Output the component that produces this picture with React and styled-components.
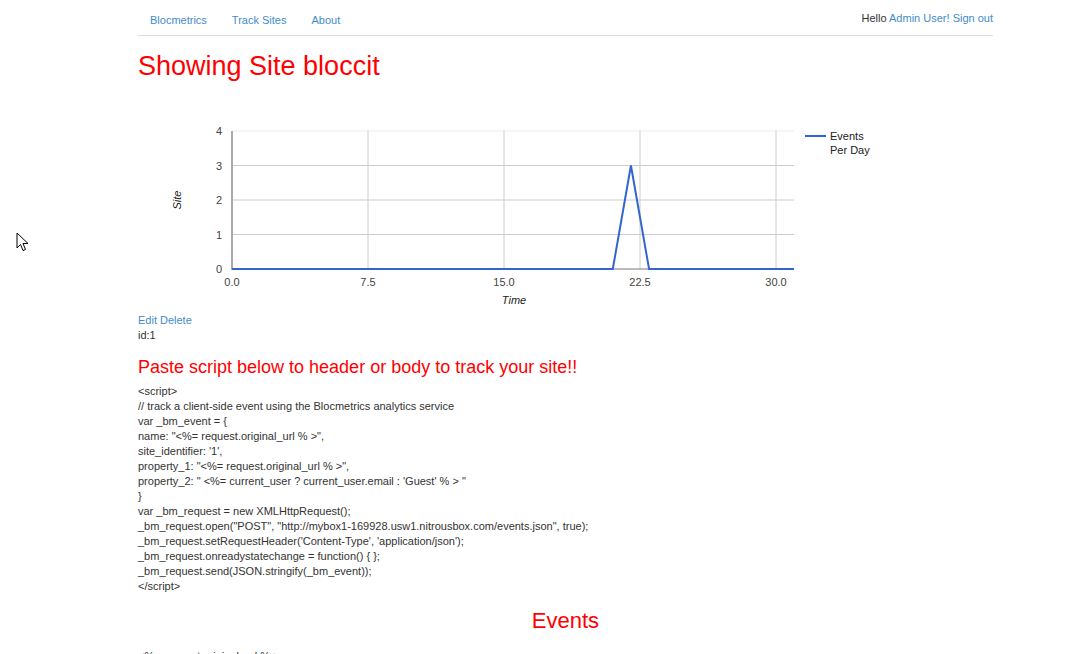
import React from "react";
import styled, { createGlobalStyle } from "styled-components";

const GlobalStyle = createGlobalStyle`
  body {
    margin: 0;
    background: #fff;
    font-family: "Liberation Sans", Arial, sans-serif;
    font-size: 11px;
    line-height: 15px;
    color: #333;
  }
`;

const Page = styled.div`
  width: 855px;
  margin-left: 138px;
`;

const Header = styled.div`
  display: flex;
  justify-content: space-between;
  height: 35px;
  border-bottom: 1px solid #ddd;
`;

const Nav = styled.ul`
  display: flex;
  margin: 0;
  padding: 0;
  list-style: none;
  padding-top: 13px;
`;

const NavItem = styled.li`
  margin-right: 1px;
`;

const Link = styled.a`
  color: #428bca;
  text-decoration: none;
  padding: ${(p) => (p.$nav ? "0 12px" : "0")};
`;

const UserBox = styled.div`
  padding-top: 11px;
`;

const Title = styled.h1`
  margin: 15px 0 28px;
  font-size: 27px;
  line-height: 31px;
  font-weight: normal;
  color: #ff0000;
`;

const Chart = styled.svg`
  display: block;
  width: 855px;
  height: 203px;
  font-family: "Liberation Sans", Arial, sans-serif;
`;

const Actions = styled.div`
  display: flex;
  gap: 3px;
`;

const Heading = styled.h2`
  margin: 13px 0 6px;
  font-size: 18px;
  line-height: 22px;
  font-weight: normal;
  color: #ff0000;
`;

const Code = styled.div`
  white-space: pre;
`;

const Section = styled.h2`
  margin: 14px 0 15px;
  font-size: 22px;
  line-height: 26px;
  font-weight: normal;
  text-align: center;
  color: #ff0000;
`;

const Cursor = styled.svg`
  position: absolute;
  left: 16px;
  top: 232px;
  width: 13px;
  height: 20px;
`;

const scriptLines = [
  "<script>",
  "// track a client-side event using the Blocmetrics analytics service",
  "var _bm_event = {",
  'name: "<%= request.original_url % >",',
  "site_identifier: '1',",
  'property_1: "<%= request.original_url % >",',
  "property_2: \" <%= current_user ? current_user.email : 'Guest' % > \"",
  "}",
  "var _bm_request = new XMLHttpRequest();",
  '_bm_request.open("POST", "http://mybox1-169928.usw1.nitrousbox.com/events.json", true);',
  "_bm_request.setRequestHeader('Content-Type', 'application/json');",
  "_bm_request.onreadystatechange = function() { };",
  "_bm_request.send(JSON.stringify(_bm_event));",
  "</script>",
];

// chart geometry (local svg coordinates)
const X0 = 94;
const X1 = 656;
const Y0 = 159;
const Y1 = 21;
const xScale = (v) => X0 + (v * 136) / 7.5;
const yScale = (v) => Y0 - ((Y0 - Y1) * v) / 4;
const data = [
  [0, 0],
  [21, 0],
  [22, 3],
  [23, 0],
  [31, 0],
];

function EventsChart() {
  const points = data.map(([x, y]) => `${Math.min(xScale(x), X1)},${yScale(y)}`).join(" ");
  return (
    <Chart viewBox="0 0 855 203">
      {[1, 2, 3, 4].map((v) => (
        <line key={"h" + v} x1={X0} x2={X1} y1={yScale(v)} y2={yScale(v)} stroke={v === 4 ? "#ebebeb" : "#ccc"} />
      ))}
      {[7.5, 15, 22.5, 30].map((v) => (
        <line key={"v" + v} x1={xScale(v)} x2={xScale(v)} y1={Y1} y2={Y0} stroke="#ccc" />
      ))}
      <line x1={X0} x2={X0} y1={Y1} y2={Y0 + 1} stroke="#aaa" strokeWidth="2" />
      <line x1={X0} x2={X1} y1={Y0} y2={Y0} stroke="#777" />
      <polyline points={points} fill="none" stroke="#3366cc" strokeWidth="2" strokeLinejoin="miter" />
      {[0, 1, 2, 3, 4].map((v) => (
        <text key={"yl" + v} x={84} y={yScale(v) + 4} textAnchor="end" fontSize="11" fill="#444">
          {v}
        </text>
      ))}
      {["0.0", "7.5", "15.0", "22.5", "30.0"].map((t, i) => (
        <text key={"xl" + t} x={X0 + i * 136} y={176} textAnchor="middle" fontSize="11" fill="#444">
          {t}
        </text>
      ))}
      <text x={376} y={194} textAnchor="middle" fontSize="11" fontStyle="italic" fill="#222">
        Time
      </text>
      <text
        x={43}
        y={90}
        textAnchor="middle"
        fontSize="11"
        fontStyle="italic"
        fill="#222"
        transform="rotate(-90 43 90)"
      >
        Site
      </text>
      <line x1={667} x2={688} y1={26} y2={26} stroke="#3366cc" strokeWidth="2" />
      <text x={692} y={30} fontSize="11" fill="#222">
        Events
      </text>
      <text x={692} y={44} fontSize="11" fill="#222">
        Per Day
      </text>
    </Chart>
  );
}

export default function App() {
  return (
    <>
      <GlobalStyle />
      <Cursor viewBox="0 0 13 20">
        <path d="M1 1 L1 16 L4.5 12.5 L7 18.5 L9.5 17.5 L7 11.5 L12 11.5 Z" fill="#fff" stroke="#000" strokeWidth="1" strokeLinejoin="miter" />
      </Cursor>
      <Page>
        <Header>
          <Nav>
            <NavItem><Link $nav href="#">Blocmetrics</Link></NavItem>
            <NavItem><Link $nav href="#">Track Sites</Link></NavItem>
            <NavItem><Link $nav href="#">About</Link></NavItem>
          </Nav>
          <UserBox>
            Hello <Link href="#">Admin User!</Link> <Link href="#">Sign out</Link>
          </UserBox>
        </Header>
        <Title>Showing Site bloccit</Title>
        <EventsChart />
        <Actions>
          <Link href="#">Edit</Link>
          <Link href="#">Delete</Link>
        </Actions>
        <div>id:1</div>
        <Heading>Paste script below to header or body to track your site!!</Heading>
        <Code>{scriptLines.join("\n")}</Code>
        <Section>Events</Section>
        <div>&lt;%= request.original_url % &gt;</div>
      </Page>
    </>
  );
}
